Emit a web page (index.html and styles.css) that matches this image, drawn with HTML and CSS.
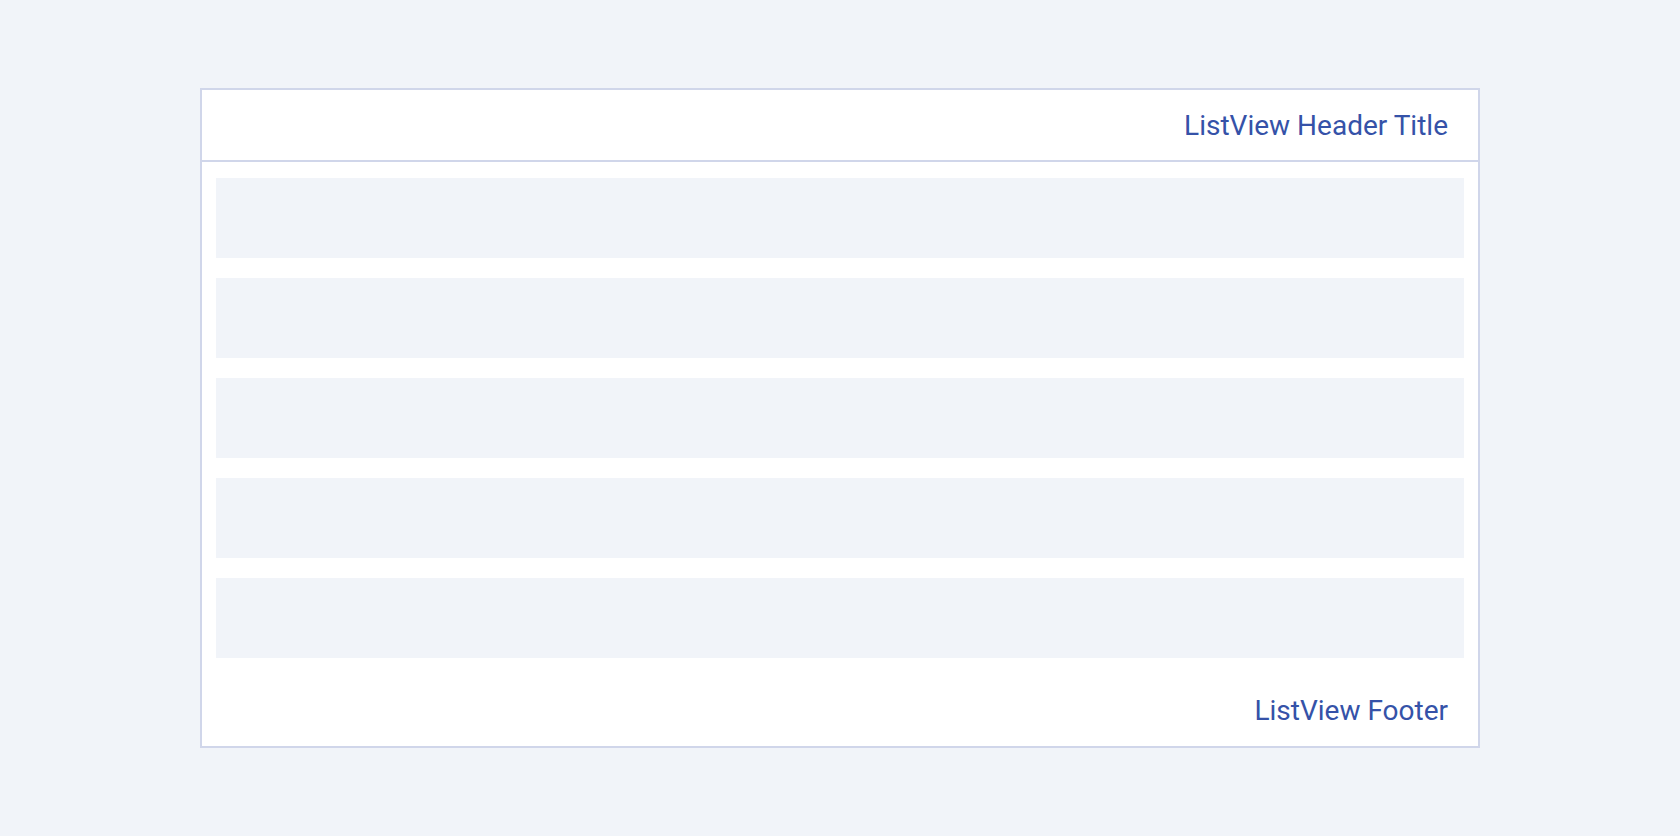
FILE: index.html
```html
<!DOCTYPE html>
<html lang="en">
<head>
    <meta charset="UTF-8">
    <meta name="viewport" content="width=device-width, initial-scale=1.0">
    <title>ListView</title>
    <link rel="stylesheet" href="styles.css">
</head>
<body>

    <div class="listview">
        <div class="listview-header">ListView Header Title</div>
        <div class="listview-items">
            <div class="listview-item"></div>
            <div class="listview-item"></div>
            <div class="listview-item"></div>
            <div class="listview-item"></div>
            <div class="listview-item"></div>
        </div>
        <div class="listview-footer">ListView Footer</div>
    </div>

</body>
</html>
```

FILE: styles.css
```css
body {
    font-family: Roboto, "Noto Sans", sans-serif;
    background-color: #f1f4f9;
    margin: 0;
    padding: 88px 0 0 200px;
}
.listview {
    width: 1276px;
    border: 2px solid #d0d6ea;
    background-color: #fff;
}
.listview-header {
    height: 70px;
    border-bottom: 2px solid #d0d6ea;
    display: flex;
    align-items: center;
    justify-content: flex-end;
    padding-right: 30px;
    font-size: 28px;
    color: #3552a8;
}
.listview-items {
    padding: 16px 14px;
    display: flex;
    flex-direction: column;
    gap: 20px;
}
.listview-item {
    height: 80px;
    background-color: #f1f4f9;
}
.listview-footer {
    height: 72px;
    display: flex;
    align-items: center;
    justify-content: flex-end;
    padding-right: 30px;
    font-size: 28px;
    color: #3552a8;
}
```
